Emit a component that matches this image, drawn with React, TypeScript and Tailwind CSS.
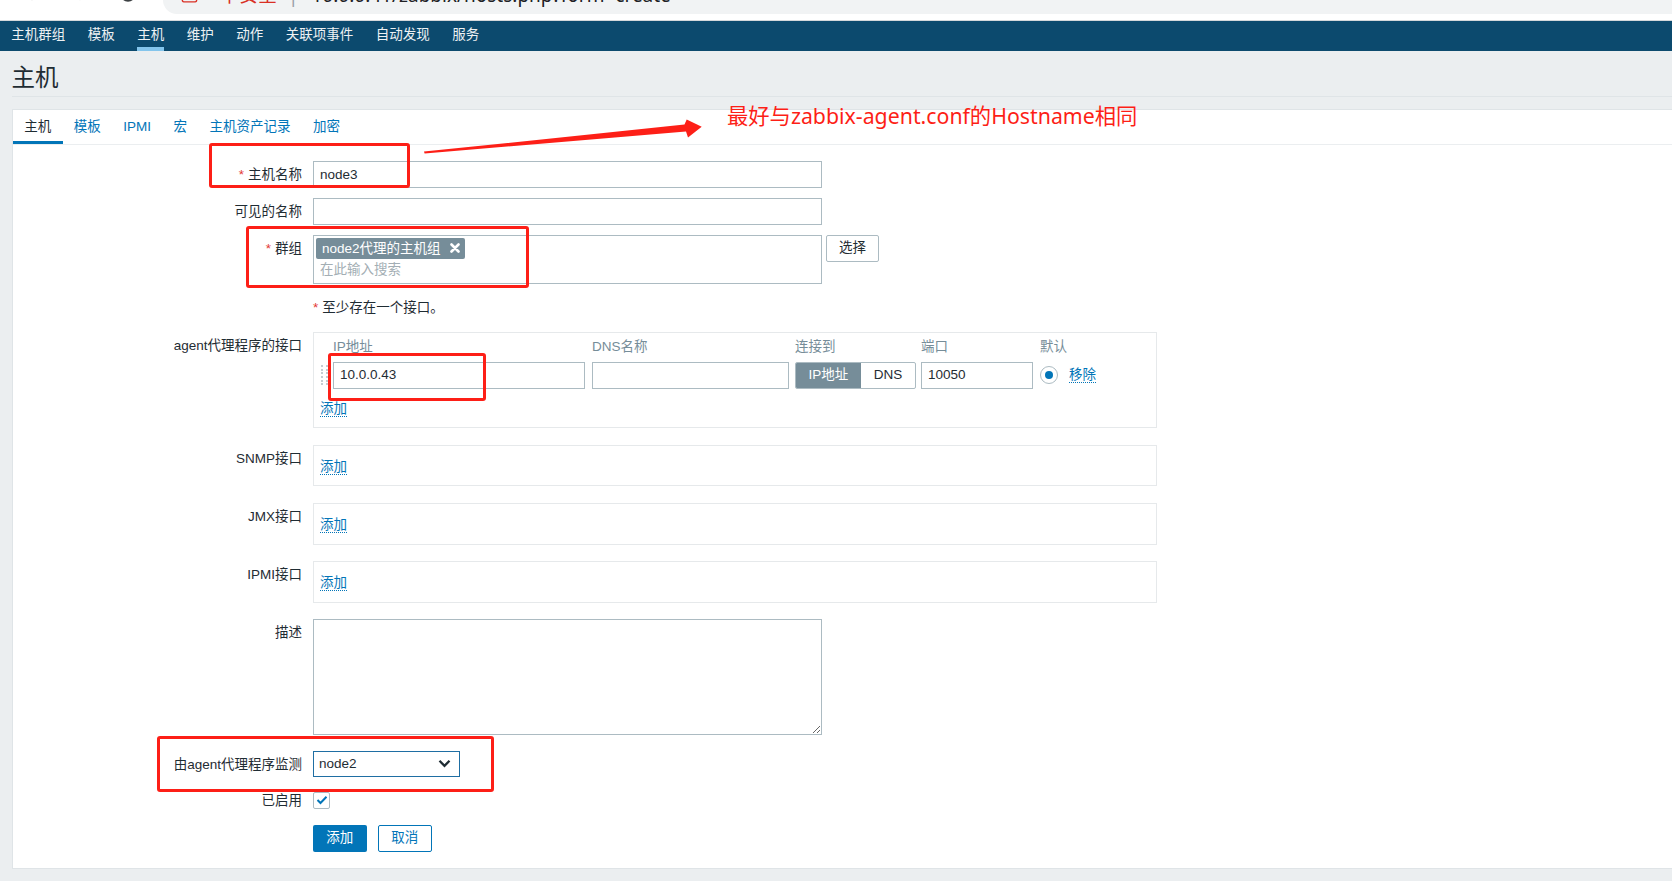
import { ArrowLeft, ArrowRight, RotateCw, TriangleAlert } from 'lucide-react'

const navItems = ['主机群组', '模板', '主机', '维护', '动作', '关联项事件', '自动发现', '服务']
const tabs = ['主机', '模板', 'IPMI', '宏', '主机资产记录', '加密']

function Req() {
  return <span className="text-[#e33734] mr-[4px]">*</span>
}

function AddLink({ children }: { children: React.ReactNode }) {
  return (
    <span className="inline-block text-[#0275b8] leading-[15px] border-b border-dotted border-[#0275b8]">{children}</span>
  )
}

function Label({ children }: { children?: React.ReactNode }) {
  return <div className="w-[289px] shrink-0 text-right leading-[27px]">{children}</div>
}

function EmptyIface({ label, className }: { label: string; className: string }) {
  return (
    <div className={`flex ${className}`}>
      <Label>{label}</Label>
      <div className="ml-[11px] w-[844px] h-[41.5px] border border-[#e6e9eb] pl-[6px] pt-[11px]">
        <AddLink>添加</AddLink>
      </div>
    </div>
  )
}

export default function App() {
  return (
    <div className="relative h-[881px] w-full overflow-hidden bg-[#ebeef0] text-[13.5px] text-[#1f2c33] font-['Liberation_Sans','Noto_Sans_CJK_SC',sans-serif]">
      {/* browser strip */}
      <div className="h-[21px] bg-white border-b border-[#d5d8db] flex overflow-hidden">
        <div className="w-[163px] shrink-0 flex items-start gap-[30px] pl-[23px] -mt-[15px] text-[#5f6368]">
          <ArrowLeft size={18} strokeWidth={2.2} />
          <ArrowRight size={18} strokeWidth={2.2} className="text-[#b0b3b6]" />
          <RotateCw size={18} strokeWidth={2.6} className="text-[#3c4043]" />
        </div>
        <div className="flex-1 h-[14px] bg-[#f1f3f4] rounded-bl-[14px] overflow-hidden">
          <div className="flex items-center h-[18px] -mt-[14px] pl-[18px] text-[19px] font-['Noto_Sans','Noto_Sans_CJK_SC',sans-serif]">
            <TriangleAlert size={17} className="text-[#d93025]" />
            <span className="ml-[22px] text-[#d93025]">不安全</span>
            <span className="ml-[11px] text-[#9aa0a6]">|</span>
            <span className="ml-[13px] text-[#202124]">10.0.0.41/zabbix/hosts.php?form=create</span>
          </div>
        </div>
      </div>

      {/* top nav */}
      <div className="h-[30px] bg-[#0c4a6e] flex">
        {navItems.map((n, i) => (
          <div key={n} className="relative px-[11.25px] pt-[4.5px] leading-[18px] text-[#eef1f3]">
            {n}
            {i === 2 && <div className="absolute left-[11.25px] right-[11.25px] bottom-0 h-[4px] bg-[#84c5ec]" />}
          </div>
        ))}
      </div>

      <div className="pl-[12px]">
        {/* header */}
        <div className="h-[46px] border-b border-[#dfe4e7] pt-[12.5px]">
          <h1 className="text-[23.5px] leading-[28px] -ml-[0.5px]">主机</h1>
        </div>

        {/* panel */}
        <div className="mt-[12px] bg-white border border-r-0 border-[#dfe4e7] pb-[16px]">
          <div className="h-[35px] border-b border-[#ebeef0] flex">
            {tabs.map((t, i) => (
              <div
                key={t}
                className={`relative px-[11.25px] flex items-center ${i === 0 ? 'text-[#1f2c33]' : 'text-[#0275b8]'}`}
              >
                {t}
                {i === 0 && <div className="absolute left-0 right-0 bottom-0 h-[3px] bg-[#0275b8]" />}
              </div>
            ))}
          </div>

          {/* form */}
          <div className="pt-[16px]">
            <div className="flex">
              <Label><Req />主机名称</Label>
              <div className="ml-[11px] w-[509px] h-[27px] border border-[#acbbc2] px-[6px] leading-[25px]">node3</div>
            </div>

            <div className="flex mt-[10px]">
              <Label>可见的名称</Label>
              <div className="ml-[11px] w-[509px] h-[27px] border border-[#acbbc2]" />
            </div>

            <div className="flex mt-[10px]">
              <Label><Req />群组</Label>
              <div className="ml-[11px] w-[509px] h-[49px] border border-[#acbbc2] pl-[2px] pt-[1.5px]">
                <div className="inline-flex items-center h-[21px] bg-[#768d99] text-white rounded-[2px] pl-[6px] pr-[5px] leading-[19px]">
                  node2代理的主机组
                  <svg width="10" height="10" viewBox="0 0 10 10" className="ml-[9px]">
                    <path d="M1.5 1.5 L8.5 8.5 M8.5 1.5 L1.5 8.5" stroke="white" strokeWidth="2.6" strokeLinecap="round" />
                  </svg>
                </div>
                <div className="pl-[4px] mt-[2px] leading-[18px] text-[#a3aeb4]">在此输入搜索</div>
              </div>
              <div className="ml-[4px] w-[53px] h-[26.5px] border border-[#acbbc2] rounded-[2px] text-center leading-[24.5px]">选择</div>
            </div>

            <div className="flex mt-[10px]">
              <Label />
              <div className="ml-[11px] leading-[27px]"><Req />至少存在一个接口。</div>
            </div>

            {/* agent interfaces */}
            <div className="flex mt-[11px]">
              <Label>agent代理程序的接口</Label>
              <div className="ml-[11px] w-[844px] h-[95.5px] border border-[#e6e9eb] pl-[6px] pt-[6px]">
                <div className="flex leading-[16px] text-[#768d99]">
                  <div className="w-[13px]" />
                  <div className="w-[259px]">IP地址</div>
                  <div className="w-[203px]">DNS名称</div>
                  <div className="w-[126px]">连接到</div>
                  <div className="w-[119px]">端口</div>
                  <div>默认</div>
                </div>
                <div className="flex items-center mt-[7px] h-[26.5px]">
                  <div className="w-[13px] pl-[1px]">
                    <div className="grid grid-cols-2 gap-x-[3px] gap-y-[1.7px] w-[7px]">
                      {Array.from({ length: 12 }).map((_, i) => (
                        <div key={i} className="w-[2px] h-[2px] bg-[#c4ccd1]" />
                      ))}
                    </div>
                  </div>
                  <div className="w-[252px] h-[26.5px] border border-[#acbbc2] px-[6px] leading-[24.5px]">10.0.0.43</div>
                  <div className="ml-[7px] w-[197px] h-[26.5px] border border-[#acbbc2]" />
                  <div className="ml-[6px] w-[121px] h-[26.5px] border border-[#acbbc2] rounded-[2px] flex overflow-hidden">
                    <div className="w-[65px] bg-[#768d99] text-white text-center leading-[24.5px]">IP地址</div>
                    <div className="flex-1 text-center leading-[24.5px]">DNS</div>
                  </div>
                  <div className="ml-[5px] w-[112px] h-[26.5px] border border-[#acbbc2] px-[6px] leading-[24.5px]">10050</div>
                  <div className="ml-[7px] w-[18px] h-[18px] rounded-full border border-[#acbbc2] flex items-center justify-center">
                    <div className="w-[8px] h-[8px] rounded-full bg-[#0275b8]" />
                  </div>
                  <div className="ml-[11px]"><AddLink>移除</AddLink></div>
                </div>
                <div className="mt-[10px]"><AddLink>添加</AddLink></div>
              </div>
            </div>

            <EmptyIface label="SNMP接口" className="mt-[17px]" />
            <EmptyIface label="JMX接口" className="mt-[17.2px]" />
            <EmptyIface label="IPMI接口" className="mt-[16.7px]" />

            <div className="flex mt-[16.5px]">
              <Label>描述</Label>
              <textarea className="ml-[11px] w-[509px] h-[115.5px] border border-[#acbbc2] outline-none resize" />
            </div>

            <div className="flex mt-[16px]">
              <Label>由agent代理程序监测</Label>
              <div className="ml-[11px] w-[146.5px] h-[26px] border border-[#1f6ea3] flex items-center justify-between pl-[5px] pr-[8px]">
                <span>node2</span>
                <svg width="13" height="9" viewBox="0 0 13 9">
                  <path d="M1.5 1.8 L6.5 6.8 L11.5 1.8" fill="none" stroke="#1f2c33" strokeWidth="2.3" />
                </svg>
              </div>
            </div>

            <div className="flex mt-[14px]">
              <div className="w-[289px] shrink-0 text-right leading-[17px]">已启用</div>
              <div className="ml-[11px] w-[17px] h-[17px] border border-[#acbbc2] rounded-[2px] flex items-center justify-center">
                <svg width="12" height="10" viewBox="0 0 12 10">
                  <path d="M1.5 5 L4.5 8 L10.5 1.8" fill="none" stroke="#0275b8" strokeWidth="2" />
                </svg>
              </div>
            </div>

            <div className="flex mt-[16.5px]">
              <div className="w-[289px] shrink-0" />
              <div className="ml-[11px] w-[53.5px] h-[26.7px] bg-[#0275b8] text-white rounded-[2px] text-center leading-[26.7px]">添加</div>
              <div className="ml-[11.5px] w-[53.5px] h-[26.7px] border border-[#0275b8] text-[#0275b8] bg-white rounded-[2px] text-center leading-[24.7px]">取消</div>
            </div>
          </div>
        </div>
      </div>

      {/* annotations */}
      <div className="absolute left-[209px] top-[142.5px] w-[201px] h-[45.5px] border-[3px] border-[#fd1f17] rounded-[3px]" />
      <div className="absolute left-[246px] top-[226px] w-[283px] h-[62px] border-[3px] border-[#fd1f17] rounded-[3px]" />
      <div className="absolute left-[328px] top-[353px] w-[158px] h-[48px] border-[3px] border-[#fd1f17] rounded-[3px]" />
      <div className="absolute left-[157px] top-[736px] w-[337px] h-[56px] border-[3px] border-[#fd1f17] rounded-[3px]" />
      <svg className="absolute left-0 top-0 pointer-events-none" width="1672" height="881">
        <polygon
          points="424,151.6 684.5,124.6 686.7,119.5 701.7,126.7 688,137.5 686,131.6 424.6,153.4"
          fill="#fd1f17"
        />
      </svg>
      <div className="absolute left-[727px] top-[103px] text-[21.3px] leading-[25px] text-[#fd1f17] font-['Noto_Sans','Noto_Sans_CJK_SC',sans-serif]">
        最好与zabbix-agent.conf的Hostname相同
      </div>
    </div>
  )
}
